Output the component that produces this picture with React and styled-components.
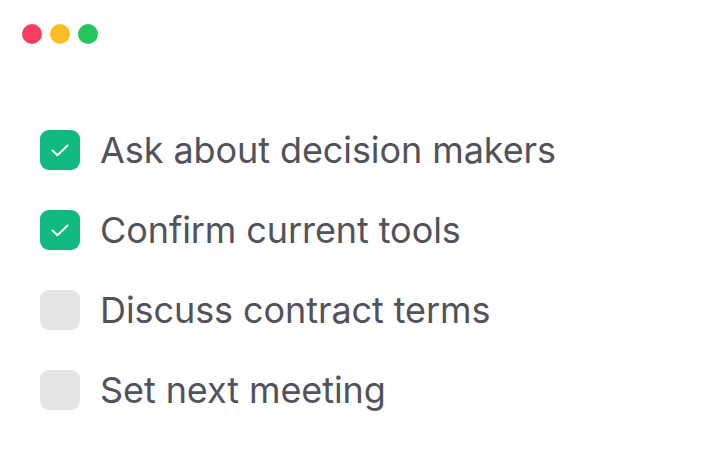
import { createGlobalStyle, styled } from "styled-components"

const GlobalStyle = createGlobalStyle`
  body {
    margin: 0;
    background: #ffffff;
    font-family: Inter, "Noto Sans", sans-serif;
  }
`

const Window = styled.div`
  width: 720px;
  height: 458px;
  box-sizing: border-box;
  padding: 24px 22px;
  background: #ffffff;
`

const Dots = styled.div`
  display: flex;
  gap: 8px;
`

const Dot = styled.span`
  width: 20px;
  height: 20px;
  border-radius: 50%;
  background: ${(p) => p.color};
`

const List = styled.ul`
  list-style: none;
  margin: 86px 0 0 18px;
  padding: 0;
  display: flex;
  flex-direction: column;
  gap: 40px;
`

const Item = styled.li`
  display: flex;
  align-items: center;
  gap: 20px;
  height: 40px;
`

const Box = styled.span`
  width: 40px;
  height: 40px;
  flex-shrink: 0;
  border-radius: 9px;
  background: ${(p) => (p.checked ? "#10b981" : "#e4e4e7")};
  display: flex;
  align-items: center;
  justify-content: center;
`

const Label = styled.span`
  font-size: 36px;
  color: #52525b;
  letter-spacing: -0.08px;
  line-height: 1;
`

const tasks = [
  { text: "Ask about decision makers", done: true },
  { text: "Confirm current tools", done: true },
  { text: "Discuss contract terms", done: false },
  { text: "Set next meeting", done: false },
]

function Check() {
  return (
    <svg width="18" height="13" viewBox="0 0 18 13" fill="none" stroke="#fff" strokeWidth="2" strokeLinecap="round" strokeLinejoin="round">
      <path d="M1.5 6.5L6.5 11.2L16.5 1.5" />
    </svg>
  )
}

export default function App() {
  return (
    <Window>
      <GlobalStyle />
      <Dots>
        <Dot color="#f43f5e" />
        <Dot color="#fbbf24" />
        <Dot color="#22c55e" />
      </Dots>
      <List>
        {tasks.map((t) => (
          <Item key={t.text}>
            <Box checked={t.done}>{t.done && <Check />}</Box>
            <Label>{t.text}</Label>
          </Item>
        ))}
      </List>
    </Window>
  )
}
